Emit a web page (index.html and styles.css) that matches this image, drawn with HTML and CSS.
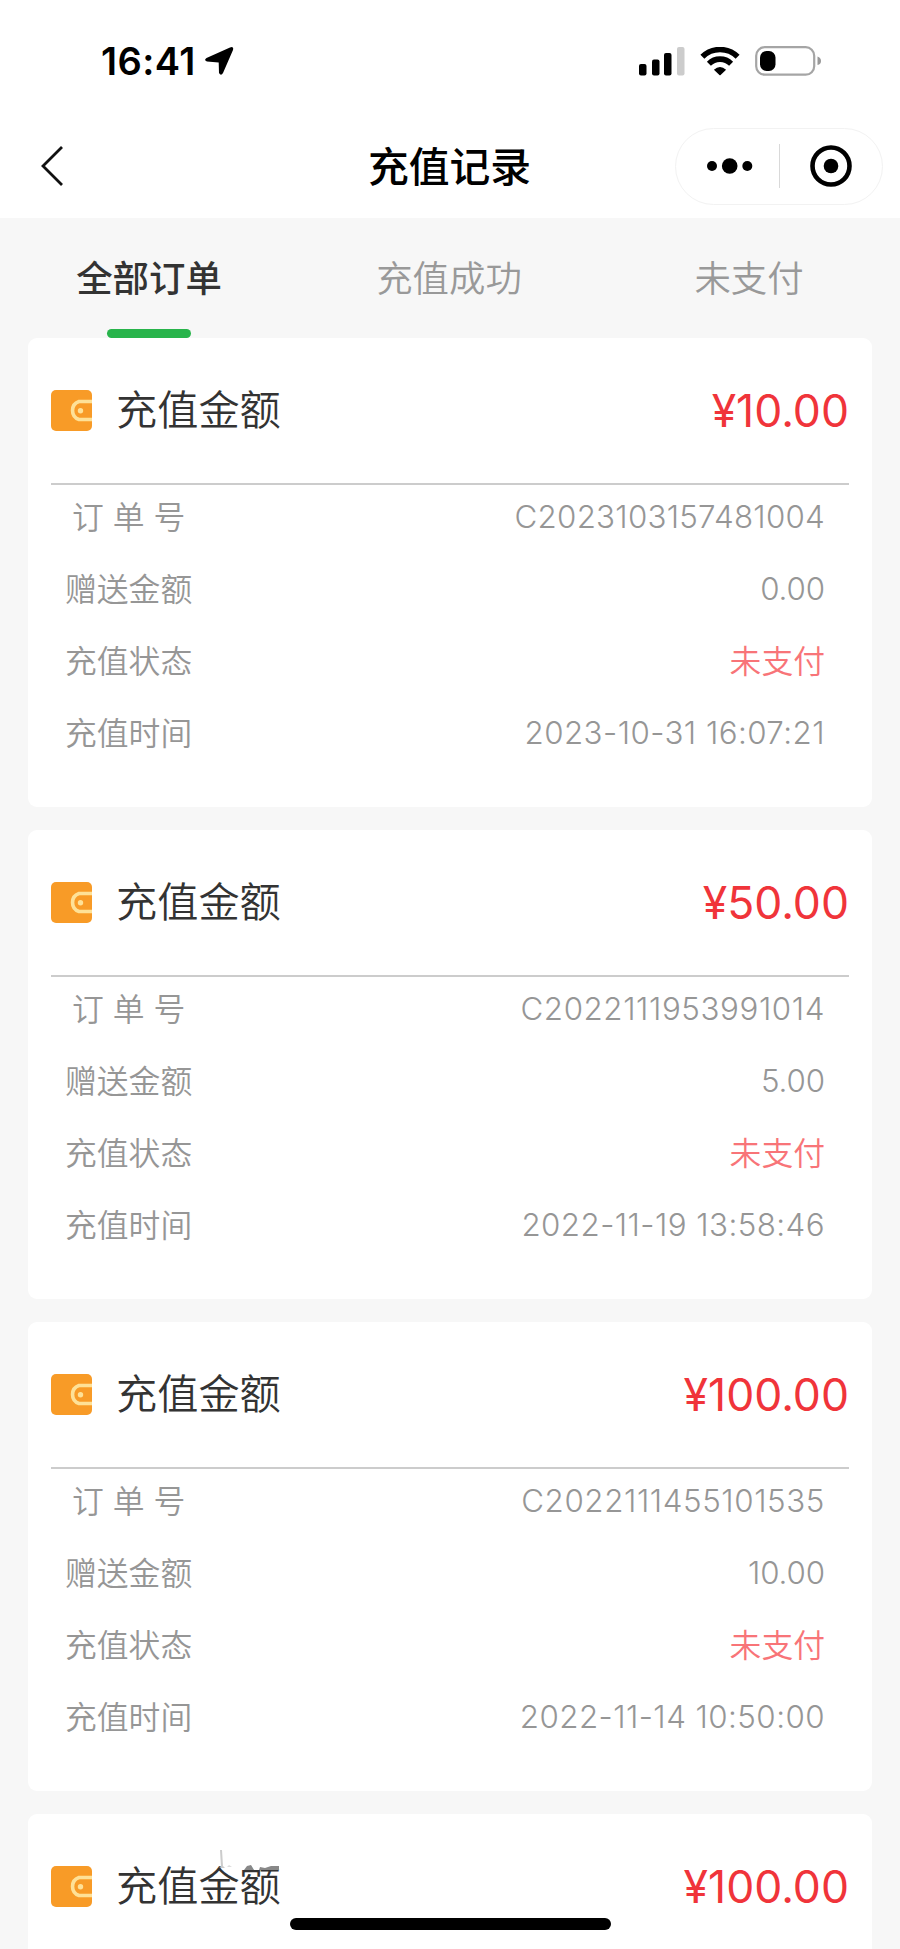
FILE: index.html
```html
<!DOCTYPE html>
<html lang="zh-CN">
<head>
<meta charset="utf-8">
<title>充值记录</title>
<link rel="stylesheet" href="styles.css">
</head>
<body>
<div class="phone">
  <header class="header">
    <div class="status">
      <div class="status-left">
        <span class="clock">16:41</span>
        <svg class="locate" width="30" height="30" viewBox="0 0 30 30"><path d="M2.500 12 26 1.500Q30 0 29 4L19 27Q17 30.500 15 27L14.700 16.500 3 15.500Q-.5 14 2.500 12Z"/></svg>
      </div>
      <div class="status-right">
        <svg width="46" height="29" viewBox="0 0 46 29"><rect x="0" y="17" width="7.500" height="11.500" rx="2"/><rect x="13" y="12.500" width="7.500" height="16" rx="2"/><rect x="25" y="6" width="7.500" height="22.500" rx="2"/><rect x="38" y="0" width="7.500" height="28.500" rx="2" fill="#ccc"/></svg>
        <svg class="wifi" width="40" height="29" viewBox="0 0 40 29"><g fill="none" stroke="#000" stroke-width="5.600"><path d="M2.400 9.800A25 25 0 0 1 37.600 9.800"/><path d="M8.900 16.800A15.600 15.600 0 0 1 31.100 16.800"/></g><path d="M13.900 22.700Q20 17.200 26.100 22.700L20.600 28Q20 28.600 19.400 28Z"/></svg>
        <svg class="battery" width="67" height="30" viewBox="0 0 67 30"><rect x="1.200" y="1.200" width="58" height="27.500" rx="8.500" fill="none" stroke="#a5a5a5" stroke-width="2.200"/><rect x="5" y="5" width="15.500" height="20" rx="6.500"/><path d="M62.500 10.500Q66 11.500 66 15T62.500 19Z" fill="#999"/></svg>
      </div>
    </div>
    <div class="nav">
      <svg class="back" width="24" height="42" viewBox="0 0 24 42"><path d="M22 2 3 21 22 40" fill="none" stroke="#111" stroke-width="2.800"/></svg>
      <h1 class="title">充值记录</h1>
      <div class="capsule">
        <svg width="46" height="16" viewBox="0 0 46 16"><circle cx="5" cy="8" r="5"/><circle cx="22.700" cy="8" r="7.800"/><circle cx="40.300" cy="8" r="5"/></svg>
        <i class="divider"></i>
        <svg width="42" height="42" viewBox="0 0 42 42"><circle cx="21" cy="21" r="18.500" fill="none" stroke="#000" stroke-width="4.600"/><circle cx="21" cy="21" r="7.300"/></svg>
      </div>
    </div>
  </header>
  <nav class="tabs">
    <a class="tab active">全部订单</a>
    <a class="tab">充值成功</a>
    <a class="tab">未支付</a>
  </nav>
  <main class="list">
    <section class="card">
      <div class="card-head"><svg class="wallet" width="41" height="41" viewBox="0 0 41 41"><rect width="41" height="41" rx="5" fill="#f89b27"/><path d="M41 11.500H28a9.500 9.500 0 0 0 0 18H41" fill="none" stroke="#fee197" stroke-width="3.600"/><circle cx="29.500" cy="20.700" r="2.700" fill="#fee197"/></svg><span class="name">充值金额</span><span class="price">¥10.00</span></div>
      <dl class="rows">
        <div class="row"><dt class="spaced">订 单 号</dt><dd>C2023103157481004</dd></div>
        <div class="row"><dt>赠送金额</dt><dd class="amount">0.00</dd></div>
        <div class="row"><dt>充值状态</dt><dd class="unpaid">未支付</dd></div>
        <div class="row"><dt>充值时间</dt><dd class="date">2023-10-31 16:07:21</dd></div>
      </dl>
    </section>
    <section class="card">
      <div class="card-head"><svg class="wallet" width="41" height="41" viewBox="0 0 41 41"><rect width="41" height="41" rx="5" fill="#f89b27"/><path d="M41 11.500H28a9.500 9.500 0 0 0 0 18H41" fill="none" stroke="#fee197" stroke-width="3.600"/><circle cx="29.500" cy="20.700" r="2.700" fill="#fee197"/></svg><span class="name">充值金额</span><span class="price">¥50.00</span></div>
      <dl class="rows">
        <div class="row"><dt class="spaced">订 单 号</dt><dd class="wide">C2022111953991014</dd></div>
        <div class="row"><dt>赠送金额</dt><dd class="amount">5.00</dd></div>
        <div class="row"><dt>充值状态</dt><dd class="unpaid">未支付</dd></div>
        <div class="row"><dt>充值时间</dt><dd class="date">2022-11-19 13:58:46</dd></div>
      </dl>
    </section>
    <section class="card">
      <div class="card-head"><svg class="wallet" width="41" height="41" viewBox="0 0 41 41"><rect width="41" height="41" rx="5" fill="#f89b27"/><path d="M41 11.500H28a9.500 9.500 0 0 0 0 18H41" fill="none" stroke="#fee197" stroke-width="3.600"/><circle cx="29.500" cy="20.700" r="2.700" fill="#fee197"/></svg><span class="name">充值金额</span><span class="price">¥100.00</span></div>
      <dl class="rows">
        <div class="row"><dt class="spaced">订 单 号</dt><dd class="wide">C2022111455101535</dd></div>
        <div class="row"><dt>赠送金额</dt><dd class="amount">10.00</dd></div>
        <div class="row"><dt>充值状态</dt><dd class="unpaid">未支付</dd></div>
        <div class="row"><dt>充值时间</dt><dd class="date">2022-11-14 10:50:00</dd></div>
      </dl>
    </section>
    <section class="card">
      <div class="card-head"><svg class="wallet" width="41" height="41" viewBox="0 0 41 41"><rect width="41" height="41" rx="5" fill="#f89b27"/><path d="M41 11.500H28a9.500 9.500 0 0 0 0 18H41" fill="none" stroke="#fee197" stroke-width="3.600"/><circle cx="29.500" cy="20.700" r="2.700" fill="#fee197"/></svg><span class="name">充值金额</span><span class="price">¥100.00</span></div>
    </section>
  </main>
  <!-- faint specks above the last card title -->
  <svg class="specks" width="64" height="26" viewBox="0 0 64 26"><path d="M2 2 3 19 1 20H7L5 18 4 2Z" fill="#ccc"/><path d="M9 19 11 17 14 19Z" fill="#ddd"/><path d="M26 22 29 18 33 17 36 22ZM42 19 47 20 53 18 61 18V22H41Z" fill="#888"/></svg>
  <div class="home-bar"></div>
</div>
</body>
</html>
```

FILE: styles.css
```css
* { box-sizing: border-box; }
body {
  margin: 0;
  background: #f7f7f7;
  font-family: Inter, "Noto Sans CJK SC", sans-serif;
}
svg { display: block; flex: none; }
.phone {
  position: relative;
  width: 900px;
  height: 1949px;
  overflow: hidden;
}
.header { height: 218px; background: #fff; }
.status {
  display: flex;
  justify-content: space-between;
  height: 114px;
  padding: 0 78px 0 101px;
}
.status-left, .status-right { display: flex; align-items: center; height: 122px; }
.clock { font-size: 38px; font-weight: 600; letter-spacing: 0.400px; }
.locate { margin-left: 8px; }
.wifi { margin-left: 15px; }
.battery { margin-left: 15px; }
.nav {
  display: grid;
  grid-template-columns: 1fr auto 1fr;
  align-items: center;
  height: 104px;
  padding: 0 17px 0 40px;
}
.title {
  margin: 1px 24px 0 0;
  font-size: 40.800px;
  font-weight: 500;
  line-height: 60px;
}
.capsule {
  display: flex;
  align-items: center;
  justify-self: end;
  width: 208px;
  height: 77px;
  padding: 0 30px 0 31px;
  justify-content: space-between;
  border: 1.500px solid #f2f2f2;
  border-radius: 39px;
}
.divider { width: 1px; height: 44px; margin-right: 5px; background: #d9d9d9; }
.tabs { display: grid; grid-template-columns: repeat(3, 300px); height: 120px; margin-left: -1px; }
.tab {
  display: flex;
  flex-direction: column;
  align-items: center;
  justify-content: space-between;
  padding-top: 31px;
  color: #999;
  font-size: 36.400px;
  font-weight: 350;
  line-height: 60px;
}
.active { color: #333; font-weight: 500; }
.active::after {
  content: "";
  width: 84px;
  height: 9px;
  border-radius: 5px;
  background: #28b44b;
}
.list { display: flex; flex-direction: column; gap: 23px; padding: 0 28px; }
.card { flex: none; height: 469px; padding: 0 23px; background: #fff; border-radius: 9px; }
.card-head {
  display: flex;
  align-items: center;
  height: 147px;
  border-bottom: 2px solid #ccc;
}
.name { margin: -2px 0 0 24px; color: #333; font-size: 41.200px; font-weight: 350; line-height: 60px; }
.price { margin: 1px 0 0 auto; color: #f0343a; font-size: 44.500px; line-height: 60px; }
.rows { display: flex; flex-direction: column; gap: 8px; margin: 0; padding: 0 24px 0 14px; }
.row {
  display: flex;
  align-items: center;
  justify-content: space-between;
  height: 64px;
  color: #969696;
  font-size: 31.800px;
  font-weight: 350;
}
.row dt { margin-top: -4px; }
.row dd { margin: 0; font-size: 31.300px; letter-spacing: 0.250px; }
.row .wide { letter-spacing: 0.600px; }
.row .date { letter-spacing: 0.450px; }
.row .amount { letter-spacing: -0.100px; }
.row .spaced { margin-left: 7px; }
.row .unpaid { margin-top: -4px; color: #f87478; font-size: 31.800px; letter-spacing: 0; }
.specks { position: absolute; left: 218px; top: 1848px; }
.home-bar {
  position: absolute;
  left: 290px;
  bottom: 19px;
  width: 321px;
  height: 12px;
  border-radius: 6px;
  background: #000;
}
```
